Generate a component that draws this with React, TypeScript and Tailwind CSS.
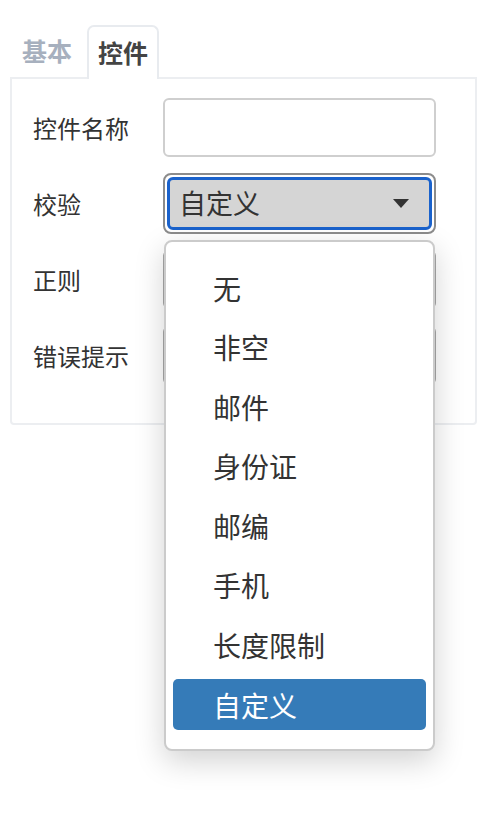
import React from "react";

const options = ["无", "非空", "邮件", "身份证", "邮编", "手机", "长度限制", "自定义"];

const App = () => {
  const selected = "自定义";

  return (
    <div
      className="relative w-[480px] h-[814px] bg-white text-[#333]"
      style={{ fontFamily: '"Noto Sans CJK SC", "Noto Sans", sans-serif' }}
    >
      {/* Tabs */}
      <div className="flex pt-[25px] pl-[10px] pr-[3px]">
        <div className="mr-[3px] h-[52px] px-[10px] flex items-center text-[25px] font-bold text-[#a7b0be] border-2 border-transparent">
          基本
        </div>
        <div className="relative -mb-[2px] z-10 h-[54px] px-[9px] flex items-center text-[25px] font-bold text-[#444] bg-white border-2 border-b-0 border-[#e8ebef] rounded-t-[7px]">
          控件
        </div>
      </div>

      {/* Panel */}
      <div className="ml-[10px] mr-[3px] border-2 border-[#eceef1] rounded-b-[4px] pt-[19px] pb-[38px] pl-[21px] flex flex-col gap-[17px]">
        <div className="flex items-center h-[59px]">
          <div className="w-[130px] text-[24px]">控件名称</div>
          <div className="w-[273px] h-[59px] border-2 border-[#cfcfcf] rounded-[6px] bg-white" />
        </div>

        <div className="flex items-center h-[59px]">
          <div className="w-[130px] text-[24px]">校验</div>
          <div className="w-[273px] h-[61px] border-2 border-[#8c8c8c] rounded-[8px] p-[2px]">
            <div className="h-full flex items-center justify-between pl-[9px] pr-[20px] bg-[#d5d5d5] border-[3px] border-[#1a62cc] rounded-[6px]">
              <span className="text-[27px] text-[#333]">自定义</span>
              <svg width="16" height="9" viewBox="0 0 16 9">
                <path d="M0 0 L16 0 L8 9 Z" fill="#333" />
              </svg>
            </div>
          </div>
        </div>

        <div className="flex items-center h-[59px]">
          <div className="w-[130px] text-[24px]">正则</div>
          <div className="w-[273px] h-[59px] border-2 border-[#a8a8a8] rounded-[6px] bg-white" />
        </div>

        <div className="flex items-center h-[59px]">
          <div className="w-[130px] text-[24px]">错误提示</div>
          <div className="w-[273px] h-[59px] border-2 border-[#a8a8a8] rounded-[6px] bg-white" />
        </div>
      </div>

      {/* Dropdown menu */}
      <div className="absolute left-[164px] top-[240px] w-[271px] h-[511px] z-20 bg-white border-2 border-[#cbcbcb] rounded-[8px] shadow-[0_10px_30px_rgba(0,0,0,0.18)] pt-[20px] px-[7px] flex flex-col gap-[8.6px]">
        {options.map((o) => (
          <div
            key={o}
            className={
              o === selected
                ? "h-[51px] shrink-0 flex items-center pl-[40px] rounded-[5px] bg-[#357bb8] text-white text-[28px]"
                : "h-[51px] shrink-0 flex items-center pl-[40px] text-[28px] text-[#333]"
            }
          >
            {o}
          </div>
        ))}
      </div>
    </div>
  );
};

export default App;
